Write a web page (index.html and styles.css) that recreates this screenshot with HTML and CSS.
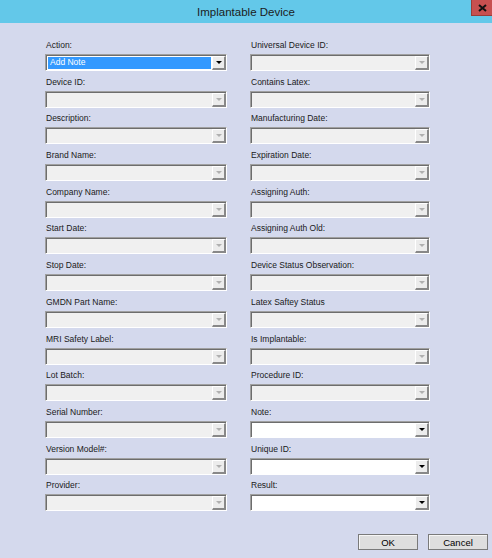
FILE: index.html
```html
<!DOCTYPE html>
<html lang="en">
<head>
    <meta charset="UTF-8">
    <meta name="viewport" content="width=device-width, initial-scale=1.0">
    <title>Implantable Device</title>
    <link rel="stylesheet" href="styles.css">
</head>
<body>
    <div class="window">
        <div class="titlebar">
            <span class="title">Implantable Device</span>
            <div class="close">
                <svg width="9" height="8" viewBox="0 0 9 8"><path d="M1 1 L8 7 M8 1 L1 7" stroke="#111" stroke-width="2"/></svg>
            </div>
        </div>

        <div class="fields">
            <!-- left column -->
            <div class="field"><label>Action:</label>
                <div class="combo enabled"><div class="box"><span class="value selected">Add Note</span><span class="btn"><i></i></span></div></div></div>
            <div class="field"><label>Device ID:</label>
                <div class="combo"><div class="box"><span class="value"></span><span class="btn"><i></i></span></div></div></div>
            <div class="field"><label>Description:</label>
                <div class="combo"><div class="box"><span class="value"></span><span class="btn"><i></i></span></div></div></div>
            <div class="field"><label>Brand Name:</label>
                <div class="combo"><div class="box"><span class="value"></span><span class="btn"><i></i></span></div></div></div>
            <div class="field"><label>Company Name:</label>
                <div class="combo"><div class="box"><span class="value"></span><span class="btn"><i></i></span></div></div></div>
            <div class="field"><label>Start Date:</label>
                <div class="combo"><div class="box"><span class="value"></span><span class="btn"><i></i></span></div></div></div>
            <div class="field"><label>Stop Date:</label>
                <div class="combo"><div class="box"><span class="value"></span><span class="btn"><i></i></span></div></div></div>
            <div class="field"><label>GMDN Part Name:</label>
                <div class="combo"><div class="box"><span class="value"></span><span class="btn"><i></i></span></div></div></div>
            <div class="field"><label>MRI Safety Label:</label>
                <div class="combo"><div class="box"><span class="value"></span><span class="btn"><i></i></span></div></div></div>
            <div class="field"><label>Lot Batch:</label>
                <div class="combo"><div class="box"><span class="value"></span><span class="btn"><i></i></span></div></div></div>
            <div class="field"><label>Serial Number:</label>
                <div class="combo"><div class="box"><span class="value"></span><span class="btn"><i></i></span></div></div></div>
            <div class="field"><label>Version Model#:</label>
                <div class="combo"><div class="box"><span class="value"></span><span class="btn"><i></i></span></div></div></div>
            <div class="field"><label>Provider:</label>
                <div class="combo"><div class="box"><span class="value"></span><span class="btn"><i></i></span></div></div></div>

            <!-- right column -->
            <div class="field"><label>Universal Device ID:</label>
                <div class="combo"><div class="box"><span class="value"></span><span class="btn"><i></i></span></div></div></div>
            <div class="field"><label>Contains Latex:</label>
                <div class="combo"><div class="box"><span class="value"></span><span class="btn"><i></i></span></div></div></div>
            <div class="field"><label>Manufacturing Date:</label>
                <div class="combo"><div class="box"><span class="value"></span><span class="btn"><i></i></span></div></div></div>
            <div class="field"><label>Expiration Date:</label>
                <div class="combo"><div class="box"><span class="value"></span><span class="btn"><i></i></span></div></div></div>
            <div class="field"><label>Assigning Auth:</label>
                <div class="combo"><div class="box"><span class="value"></span><span class="btn"><i></i></span></div></div></div>
            <div class="field"><label>Assigning Auth Old:</label>
                <div class="combo"><div class="box"><span class="value"></span><span class="btn"><i></i></span></div></div></div>
            <div class="field"><label>Device Status Observation:</label>
                <div class="combo"><div class="box"><span class="value"></span><span class="btn"><i></i></span></div></div></div>
            <div class="field"><label>Latex Saftey Status</label>
                <div class="combo"><div class="box"><span class="value"></span><span class="btn"><i></i></span></div></div></div>
            <div class="field"><label>Is Implantable:</label>
                <div class="combo"><div class="box"><span class="value"></span><span class="btn"><i></i></span></div></div></div>
            <div class="field"><label>Procedure ID:</label>
                <div class="combo"><div class="box"><span class="value"></span><span class="btn"><i></i></span></div></div></div>
            <div class="field"><label>Note:</label>
                <div class="combo enabled"><div class="box"><span class="value"></span><span class="btn"><i></i></span></div></div></div>
            <div class="field"><label>Unique ID:</label>
                <div class="combo enabled"><div class="box"><span class="value"></span><span class="btn"><i></i></span></div></div></div>
            <div class="field"><label>Result:</label>
                <div class="combo enabled"><div class="box"><span class="value"></span><span class="btn"><i></i></span></div></div></div>
        </div>

        <div class="actions">
            <button class="push">OK</button>
            <button class="push">Cancel</button>
        </div>
    </div>
</body>
</html>
```

FILE: styles.css
```css
body { margin: 0; font-family: "Liberation Sans", Arial, sans-serif; background: #d4d9ed; }
.window { width: 492px; height: 558px; display: flex; flex-direction: column; background: #d4d9ed; }

.titlebar { height: 23px; background: #63c8e9; position: relative; display: flex; align-items: center; justify-content: center; }
.title { font-size: 11.5px; color: #1c1c1c; }
.close { position: absolute; top: 0; right: 0; width: 20px; height: 15px; background: #c75050; border-left: 1px solid #9a3c38; border-bottom: 1px solid #9a3c38; display: flex; align-items: center; justify-content: center; }

.fields { display: grid; grid-template-columns: 182px 180px; grid-template-rows: repeat(13, auto); grid-auto-flow: column; column-gap: 23px; row-gap: 5.7px; padding: 17px 0 0 45px; }
.field label { display: block; height: 11px; line-height: 11px; margin-bottom: 3px; padding-left: 1px; font-size: 8.5px; color: #1a1a1a; }

.combo { height: 17px; box-sizing: border-box; border: 1px solid; border-color: #a0a0a0 #ffffff #ffffff #a0a0a0; }
.box { height: 100%; box-sizing: border-box; display: flex; border-top: 1px solid #6d6d6d; border-left: 1px solid #6d6d6d; background: #f0f0f0; }
.combo.enabled .box { background: #fff; }
.value { flex: 1; font-size: 8.5px; line-height: 11px; padding-left: 2px; margin: 1px 1px 1px 1px; color: #000; }
.value.selected { background: #3399ff; color: #fff; }
.btn { width: 11px; border-left: 1px solid #fff; border-top: 1px solid #fff; border-right: 2px solid #888; border-bottom: 2px solid #888; background: #ececec; display: flex; align-items: center; justify-content: center; }
.btn i { width: 0; height: 0; border-left: 3px solid transparent; border-right: 3px solid transparent; border-top: 3px solid #b0b0b0; }
.combo.enabled .btn i { border-top-color: #000; }

.actions { margin-top: auto; display: flex; justify-content: flex-end; gap: 10px; padding: 0 4px 8px 0; }
.push { width: 60px; height: 16px; padding: 0; font-family: "Liberation Sans", Arial, sans-serif; font-size: 9.5px; color: #000; background: #dedede; border: 1px solid #7a7a7a; box-shadow: inset 1px 1px 0 #f6f6f6; }
```
